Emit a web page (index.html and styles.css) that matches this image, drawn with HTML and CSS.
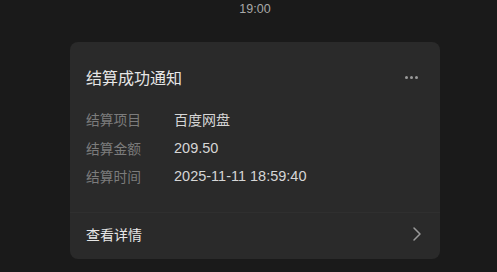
FILE: index.html
```
<!DOCTYPE html>
<html lang="zh">
<head>
<meta charset="utf-8">
<link rel="stylesheet" href="styles.css">
</head>
<body>
<div class="time">19:00</div>
<div class="card">
  <div class="header">
    <div class="title">结算成功通知</div>
    <div class="more"><span></span><span></span><span></span></div>
  </div>
  <div class="rows">
    <div class="row"><span class="label">结算项目</span><span class="value">百度网盘</span></div>
    <div class="row"><span class="label">结算金额</span><span class="value num">209.50</span></div>
    <div class="row"><span class="label">结算时间</span><span class="value num">2025-11-11 18:59:40</span></div>
  </div>
  <div class="footer">
    <span class="link">查看详情</span>
    <svg class="chev" width="10" height="16" viewBox="0 0 10 16"><path d="M2 2 L8 8 L2 14" fill="none" stroke="#9a9a9a" stroke-width="1.5" stroke-linecap="round" stroke-linejoin="round"/></svg>
  </div>
</div>
</body>
</html>
```
FILE: styles.css
```
html, body {
  margin: 0;
  padding: 0;
  background: #1a1a1a;
  font-family: "Noto Sans CJK SC", "Noto Sans", sans-serif;
}
.time {
  width: 370px;
  margin-left: 70px;
  text-align: center;
  color: #a8a8a8;
  font-size: 12.5px;
  line-height: 18px;
  height: 18px;
  font-family: "Liberation Sans", "Noto Sans CJK SC", sans-serif;
}
.card {
  width: 370px;
  margin-left: 70px;
  margin-top: 24px;
  background: #2a2a2a;
  border-radius: 8px;
  box-sizing: border-box;
}
.header {
  display: flex;
  align-items: center;
  justify-content: space-between;
  padding: 23px 22px 0 16px;
  height: 24px;
}
.title {
  color: #e6e6e6;
  font-size: 16px;
  line-height: 24px;
}
.more {
  display: flex;
  gap: 2px;
}
.more span {
  width: 3px;
  height: 3px;
  border-radius: 50%;
  background: #9a9a9a;
}
.rows {
  padding: 16px 16px 21px 16px;
  border-bottom: 1px solid #2f2f2f;
}
.row {
  display: flex;
  line-height: 28.5px;
  height: 28.5px;
  font-size: 13.75px;
}
.label {
  color: #7c7c7c;
  width: 88px;
}
.value {
  color: #d6d6d6;
  font-size: 14px;
}
.num {
  font-family: "Liberation Sans", "Noto Sans CJK SC", sans-serif;
  font-size: 14.5px;
}
.footer {
  display: flex;
  align-items: center;
  justify-content: space-between;
  box-sizing: border-box;
  height: 46px;
  padding: 0 18px 3px 16px;
}
.link {
  color: #e6e6e6;
  font-size: 14px;
}
.chev {
  display: block;
}
```
